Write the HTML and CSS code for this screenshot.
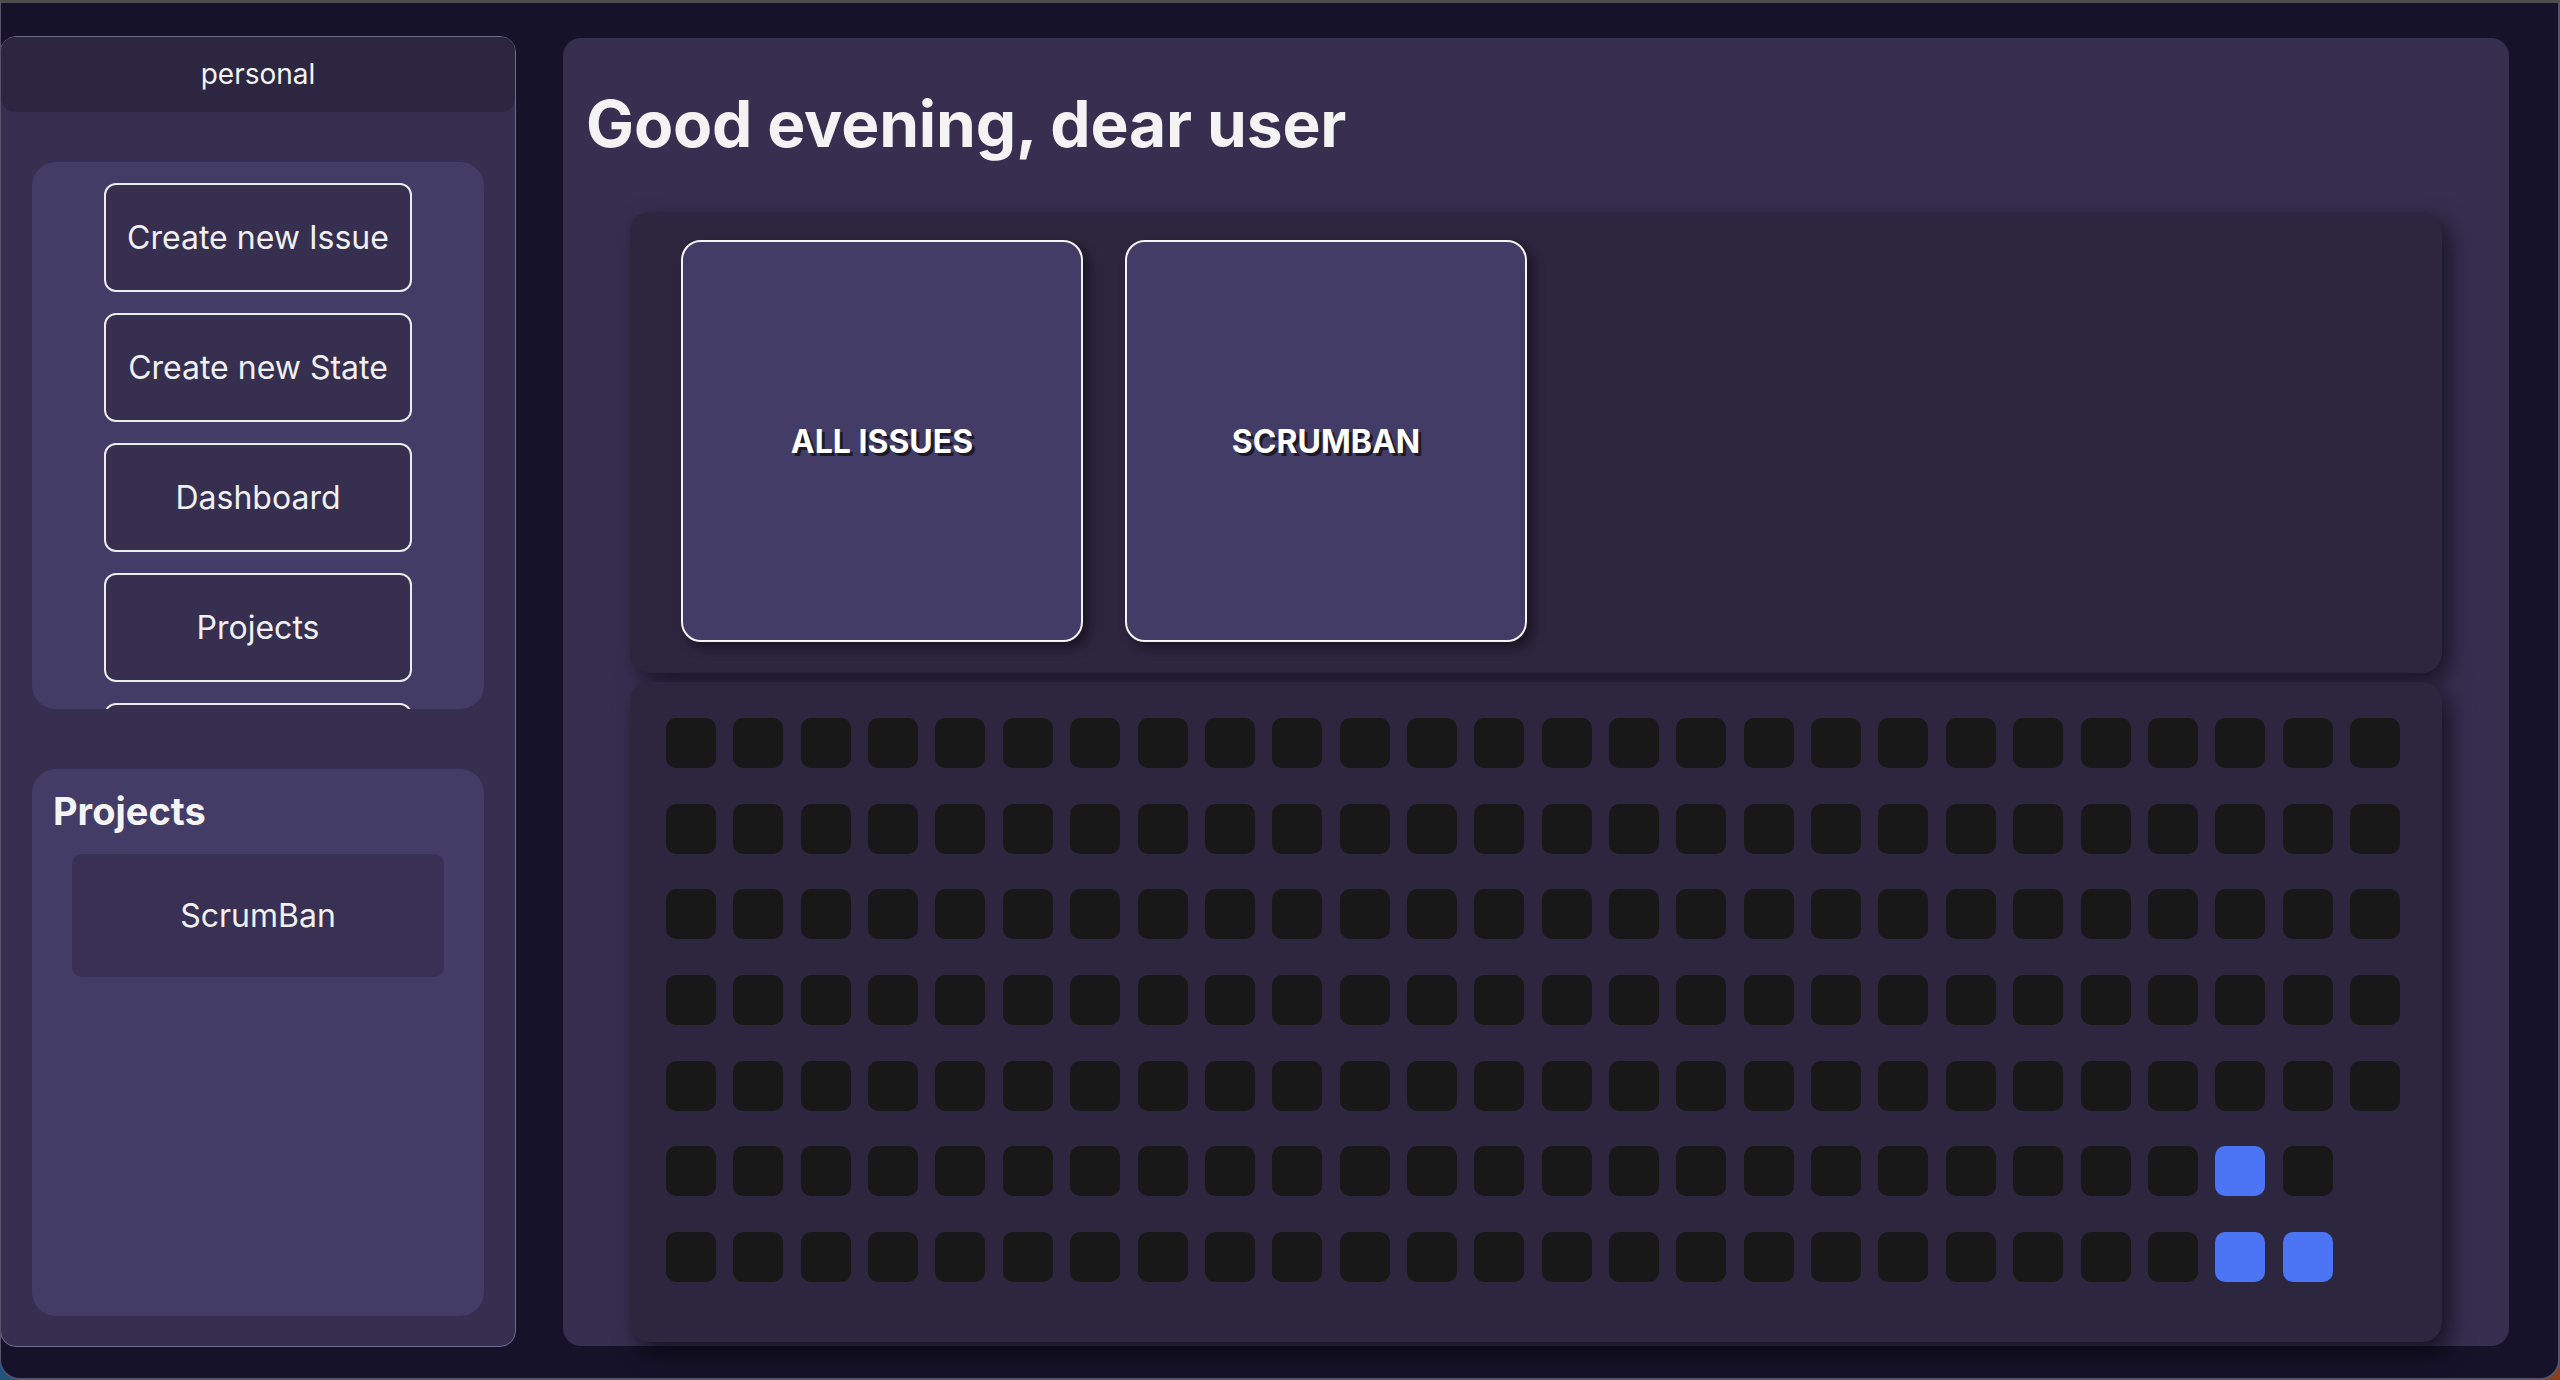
FILE: index.html
```html
<!DOCTYPE html>
<html lang="en">
<head>
    <meta charset="UTF-8">
    <meta name="viewport" content="width=device-width, initial-scale=1.0">
    <title>Dashboard</title>
    <link rel="stylesheet" href="styles.css">
</head>
<body>
    <div class="window">
        <aside class="sidebar">
            <div class="workspace">personal</div>

            <nav class="actions">
                <button class="action">Create new Issue</button>
                <button class="action">Create new State</button>
                <button class="action">Dashboard</button>
                <button class="action">Projects</button>
                <button class="action">Settings</button>
            </nav>

            <section class="projects">
                <h2>Projects</h2>
                <a class="project" href="#">ScrumBan</a>
            </section>
        </aside>

        <main class="content">
            <h1 id="greeting">Good evening, dear user</h1>

            <div class="boards">
                <a class="board" href="#">All issues</a>
                <a class="board" href="#">Scrumban</a>
            </div>

            <div class="activity" id="activity"></div>
        </main>
    </div>

    <script>
        // 180 days, filled column by column (one column = one week)
        const totalDays = 180;
        const activeDays = [166, 167, 174];

        function renderActivity() {
            const grid = document.getElementById('activity');
            for (let i = 0; i < totalDays; i++) {
                const day = document.createElement('span');
                day.className = activeDays.includes(i) ? 'day active' : 'day';
                grid.appendChild(day);
            }
        }

        renderActivity();
    </script>
</body>
</html>
```

FILE: styles.css
```css
html {
    background: linear-gradient(to right, #1f5580, #8c3f1f);
}
body {
    margin: 0;
    height: 1380px;
    font-family: Inter, "Noto Sans", sans-serif;
    color: #f3f3f3;
}
.window {
    box-sizing: border-box;
    display: flex;
    align-items: flex-start;
    height: 1380px;
    padding-top: 33px;
    background-color: #161229;
    border-top: 3px solid #4e4e4e;
    border-left: 1px solid #57536b;
    border-right: 2px solid #57536b;
    border-bottom: 2px solid #57536b;
    border-radius: 0 0 20px 20px;
    overflow: hidden;
}

/* sidebar */
.sidebar {
    box-sizing: border-box;
    width: 516px;
    height: 1311px;
    margin-left: -1px;
    background-color: #362f50;
    border: 1px solid #726c8c;
    border-radius: 16px;
    flex-shrink: 0;
}
.workspace {
    height: 75px;
    line-height: 75px;
    text-align: center;
    font-size: 28px;
    background-color: #2c2640;
    border-radius: 14px;
}
.actions {
    box-sizing: border-box;
    display: flex;
    flex-direction: column;
    align-items: center;
    gap: 21px;
    height: 547px;
    margin: 50px 31px 0;
    padding-top: 21px;
    background-color: #433c66;
    border-radius: 24px;
    overflow: hidden;
}
.action {
    flex-shrink: 0;
    width: 308px;
    height: 109px;
    font-family: inherit;
    font-size: 32px;
    color: #f0f0f0;
    background-color: #362f50;
    border: 2px solid #ececec;
    border-radius: 12px;
    cursor: pointer;
}
.projects {
    box-sizing: border-box;
    height: 547px;
    margin: 60px 31px 0;
    padding: 23px 0 0 21px;
    background-color: #433c66;
    border-radius: 24px;
}
.projects h2 {
    margin: 0;
    font-size: 38px;
    line-height: 38px;
    font-weight: 700;
}
.project {
    display: flex;
    justify-content: center;
    align-items: center;
    width: 372px;
    height: 123px;
    margin: 24px 0 0 19px;
    font-size: 32px;
    color: #f0f0f0;
    text-decoration: none;
    background-color: #383153;
    border-radius: 10px;
}

/* main area */
.content {
    box-sizing: border-box;
    width: 1946px;
    height: 1308px;
    margin: 2px 0 0 47px;
    background-color: #362f50;
    border-radius: 18px;
}
#greeting {
    margin: 54px 0 0 23px;
    font-size: 64px;
    line-height: 64px;
    font-weight: 700;
    letter-spacing: -0.15px;
}
.boards {
    box-sizing: border-box;
    display: flex;
    gap: 42px;
    height: 461px;
    margin: 56px 67px 0;
    padding: 28px 51px;
    background-color: #2c263f;
    border-radius: 20px;
    box-shadow: 8px 8px 22px rgba(0, 0, 0, 0.55);
}
.board {
    box-sizing: border-box;
    display: flex;
    justify-content: center;
    align-items: center;
    width: 402px;
    height: 402px;
    font-size: 32px;
    font-weight: 700;
    text-transform: uppercase;
    color: #ffffff;
    text-decoration: none;
    text-shadow: 3px 3px 0 #1c1a26;
    background-color: #433c66;
    border: 2px solid #f4f4f4;
    border-radius: 20px;
    box-shadow: 6px 6px 12px rgba(0, 0, 0, 0.45);
}
.activity {
    box-sizing: border-box;
    display: grid;
    grid-template-columns: repeat(26, 50px);
    grid-template-rows: repeat(7, 50px);
    grid-auto-flow: column;
    column-gap: 17.36px;
    row-gap: 35.67px;
    height: 660px;
    margin: 9px 67px 0;
    padding: 36px;
    background-color: #2c263f;
    border-radius: 20px;
    box-shadow: 8px 10px 24px rgba(0, 0, 0, 0.6);
}
.day {
    width: 50px;
    height: 50px;
    background-color: #181818;
    border-radius: 10px;
}
.day.active {
    background-color: #4b75f5;
}
```
